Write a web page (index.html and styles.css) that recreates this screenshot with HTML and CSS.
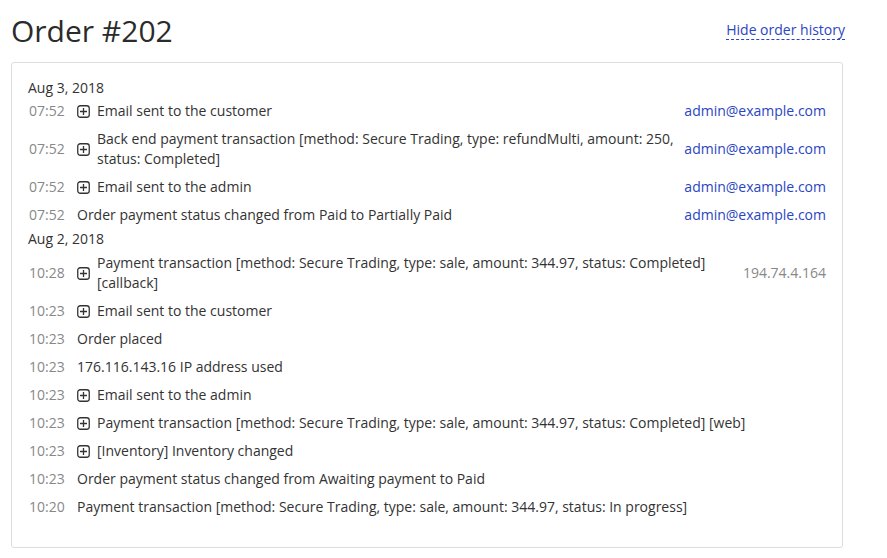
FILE: index.html
```html
<!DOCTYPE html>
<html>
<head>
<meta charset="utf-8">
<link rel="stylesheet" href="styles.css">
</head>
<body>
<div class="page">
  <div class="header">
    <h1 class="title">Order #202</h1>
    <a class="toggle" href="#">Hide order history</a>
  </div>
  <div class="history">
    <div class="date first">Aug 3, 2018</div>
    <div class="row">
      <span class="time">07:52</span>
      <span class="plus"><svg width="13" height="13" viewBox="0 0 13 13"><rect x="0.75" y="0.75" width="11.5" height="11.5" rx="2.5" fill="none" stroke="#333" stroke-width="1.3"/><path d="M6.5 3v7M3 6.5h7" stroke="#333" stroke-width="1.3"/></svg></span>
      <span class="msg">Email sent to the customer</span>
      <span class="who email">admin@example.com</span>
    </div>
    <div class="row">
      <span class="time">07:52</span>
      <span class="plus"><svg width="13" height="13" viewBox="0 0 13 13"><rect x="0.75" y="0.75" width="11.5" height="11.5" rx="2.5" fill="none" stroke="#333" stroke-width="1.3"/><path d="M6.5 3v7M3 6.5h7" stroke="#333" stroke-width="1.3"/></svg></span>
      <span class="msg">Back end payment transaction [method: Secure Trading, type: refundMulti, amount: 250, status: Completed]</span>
      <span class="who email">admin@example.com</span>
    </div>
    <div class="row">
      <span class="time">07:52</span>
      <span class="plus"><svg width="13" height="13" viewBox="0 0 13 13"><rect x="0.75" y="0.75" width="11.5" height="11.5" rx="2.5" fill="none" stroke="#333" stroke-width="1.3"/><path d="M6.5 3v7M3 6.5h7" stroke="#333" stroke-width="1.3"/></svg></span>
      <span class="msg">Email sent to the admin</span>
      <span class="who email">admin@example.com</span>
    </div>
    <div class="row">
      <span class="time">07:52</span>
      <span class="msg">Order payment status changed from Paid to Partially Paid</span>
      <span class="who email">admin@example.com</span>
    </div>
    <div class="date">Aug 2, 2018</div>
    <div class="row">
      <span class="time">10:28</span>
      <span class="plus"><svg width="13" height="13" viewBox="0 0 13 13"><rect x="0.75" y="0.75" width="11.5" height="11.5" rx="2.5" fill="none" stroke="#333" stroke-width="1.3"/><path d="M6.5 3v7M3 6.5h7" stroke="#333" stroke-width="1.3"/></svg></span>
      <span class="msg">Payment transaction [method: Secure Trading, type: sale, amount: 344.97, status: Completed] [callback]</span>
      <span class="who ip">194.74.4.164</span>
    </div>
    <div class="row">
      <span class="time">10:23</span>
      <span class="plus"><svg width="13" height="13" viewBox="0 0 13 13"><rect x="0.75" y="0.75" width="11.5" height="11.5" rx="2.5" fill="none" stroke="#333" stroke-width="1.3"/><path d="M6.5 3v7M3 6.5h7" stroke="#333" stroke-width="1.3"/></svg></span>
      <span class="msg">Email sent to the customer</span>
    </div>
    <div class="row">
      <span class="time">10:23</span>
      <span class="msg">Order placed</span>
    </div>
    <div class="row">
      <span class="time">10:23</span>
      <span class="msg">176.116.143.16 IP address used</span>
    </div>
    <div class="row">
      <span class="time">10:23</span>
      <span class="plus"><svg width="13" height="13" viewBox="0 0 13 13"><rect x="0.75" y="0.75" width="11.5" height="11.5" rx="2.5" fill="none" stroke="#333" stroke-width="1.3"/><path d="M6.5 3v7M3 6.5h7" stroke="#333" stroke-width="1.3"/></svg></span>
      <span class="msg">Email sent to the admin</span>
    </div>
    <div class="row">
      <span class="time">10:23</span>
      <span class="plus"><svg width="13" height="13" viewBox="0 0 13 13"><rect x="0.75" y="0.75" width="11.5" height="11.5" rx="2.5" fill="none" stroke="#333" stroke-width="1.3"/><path d="M6.5 3v7M3 6.5h7" stroke="#333" stroke-width="1.3"/></svg></span>
      <span class="msg">Payment transaction [method: Secure Trading, type: sale, amount: 344.97, status: Completed] [web]</span>
    </div>
    <div class="row">
      <span class="time">10:23</span>
      <span class="plus"><svg width="13" height="13" viewBox="0 0 13 13"><rect x="0.75" y="0.75" width="11.5" height="11.5" rx="2.5" fill="none" stroke="#333" stroke-width="1.3"/><path d="M6.5 3v7M3 6.5h7" stroke="#333" stroke-width="1.3"/></svg></span>
      <span class="msg">[Inventory] Inventory changed</span>
    </div>
    <div class="row">
      <span class="time">10:23</span>
      <span class="msg">Order payment status changed from Awaiting payment to Paid</span>
    </div>
    <div class="row">
      <span class="time">10:20</span>
      <span class="msg">Payment transaction [method: Secure Trading, type: sale, amount: 344.97, status: In progress]</span>
    </div>
  </div>
</div>
</body>
</html>
```

FILE: styles.css
```css
html, body {
  margin: 0;
  padding: 0;
  background: #fff;
}
body {
  font-family: "Open Sans", "Liberation Sans", sans-serif;
  font-size: 14px;
  color: #333;
}
.page {
  width: 834px;
  padding: 10px 0 0 11px;
}
.header {
  display: flex;
  justify-content: space-between;
  align-items: center;
  height: 42px;
  margin-bottom: 10px;
}
.title {
  margin: 0;
  font-size: 30px;
  font-weight: 400;
  line-height: 42px;
  color: #2b2b2b;
}
.toggle {
  color: #2a45c2;
  text-decoration: none;
  border-bottom: 1px dashed #2a45c2;
  line-height: 18px;
  font-size: 14px;
  margin-bottom: 2px;
}
.history {
  width: 798px;
  border: 1px solid #ddd;
  border-radius: 3px;
  padding: 15px 16px 26px 16px;
}
.date {
  line-height: 20px;
  color: #333;
}
.date.first {
  margin-bottom: -1px;
}
.row {
  display: flex;
  align-items: center;
  padding: 4px 0;
  line-height: 20px;
}
.time {
  width: 36px;
  flex: none;
  color: #888;
  margin-left: 1px;
  margin-right: 12px;
}
.plus {
  flex: none;
  display: flex;
  width: 13px;
  height: 13px;
  margin-right: 7px;
}
.msg {
  flex: 1;
  color: #333;
}
.who {
  flex: none;
  margin-left: 10px;
}
.email {
  color: #2a45c2;
}
.ip {
  color: #888;
}
```
